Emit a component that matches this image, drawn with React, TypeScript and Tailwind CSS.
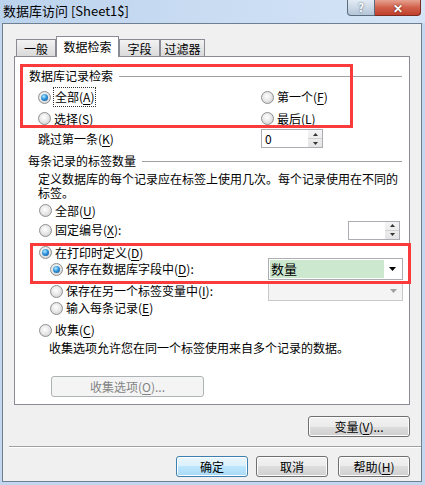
import React from "react";

function Radio({ on }: { on?: boolean }) {
  return (
    <span className="w-[13px] h-[13px] rounded-full border border-[#8e8f8f] bg-[radial-gradient(circle_at_45%_40%,#ffffff,#ececec_40%,#c8c8c8)] flex items-center justify-center shrink-0">
      {on && (
        <span className="w-[7px] h-[7px] rounded-full bg-[radial-gradient(circle_at_40%_35%,#b6ecff,#2f93dc_45%,#0b4c8c)]" />
      )}
    </span>
  );
}

function M({ t, k, after = "" }: { t: string; k: string; after?: string }) {
  return (
    <span>
      {t}(<span className="underline underline-offset-2">{k}</span>){after}
    </span>
  );
}

function Arrow({ up, color = "#333" }: { up?: boolean; color?: string }) {
  return (
    <svg width="5" height="3" viewBox="0 0 5 3">
      <path d={up ? "M2.5 0 L5 3 L0 3 Z" : "M0 0 L5 0 L2.5 3 Z"} fill={color} />
    </svg>
  );
}

function Spin({ className, value }: { className: string; value?: string }) {
  return (
    <div className={`${className} h-[19px] border border-[#abadb3] bg-white flex`}>
      <div className="flex-1 pl-[3px] leading-[17px] text-[12px]">{value}</div>
      <div className="w-[14px] flex flex-col bg-gradient-to-b from-[#f4f4f4] to-[#e4e4e4]">
        <div className="flex-1 flex items-center justify-center">
          <Arrow up />
        </div>
        <div className="h-px bg-[#d2d2d2]" />
        <div className="flex-1 flex items-center justify-center">
          <Arrow />
        </div>
      </div>
    </div>
  );
}

function Btn({
  children,
  className = "",
  primary,
  disabled,
}: {
  children: React.ReactNode;
  className?: string;
  primary?: boolean;
  disabled?: boolean;
}) {
  const skin = disabled
    ? "border-[#adb2b5] bg-[#f4f4f4] text-[#838383]"
    : primary
    ? "border-[#3c7fb1] bg-[linear-gradient(#eaf6fd_0%,#d9f0fc_50%,#bee6fd_50%,#a7d9f5_100%)] shadow-[inset_0_0_0_1px_#ffffff]"
    : "border-[#707070] bg-[linear-gradient(#f2f2f2_0%,#ebebeb_50%,#dddddd_50%,#cfcfcf_100%)] shadow-[inset_0_0_0_1px_#fcfcfc]";
  return (
    <div
      className={`${className} h-[21px] rounded-[3px] border ${skin} flex items-center justify-center text-[12px] leading-none`}
    >
      {children}
    </div>
  );
}

function Tab({ label, active, className = "" }: { label: string; active?: boolean; className?: string }) {
  return active ? (
    <div
      className={`${className} relative z-10 h-[21px] mb-[-1px] border border-b-0 border-[#898c95] bg-white flex items-center justify-center text-[12px]`}
    >
      {label}
    </div>
  ) : (
    <div
      className={`${className} h-[17px] border border-b-0 border-[#898c95] bg-gradient-to-b from-[#f3f3f3] to-[#dadada] flex items-center justify-center text-[12px] pt-[1px]`}
    >
      {label}
    </div>
  );
}

export default function App() {
  return (
    <div className="w-[425px] h-[485px] overflow-hidden bg-[#c3d8f0] font-['Noto_Sans_CJK_SC','Noto_Sans',sans-serif] text-black select-none">
      {/* Title bar */}
      <div className="h-[23px] flex justify-between bg-gradient-to-r from-[#bcd3ed] via-[#c9dcf2] to-[#d5e5f7]">
        <div className="pl-[3px] pt-[3px] text-[13px] leading-[16px]">数据库访问 [Sheet1$]</div>
        <div className="flex items-start pr-[4px]">
          <div className="w-[28px] h-[16px] rounded-bl-[4px] border border-t-0 border-[#5d6d80] bg-gradient-to-b from-[#e3ebf4] to-[#b4c5d8] flex items-center justify-center text-[11px] font-bold text-white [text-shadow:0_0_2px_#3a4a5c] leading-none">
            ?
          </div>
          <div className="w-[46px] h-[16px] rounded-br-[4px] border border-t-0 border-l-0 border-[#7a2a20] bg-gradient-to-b from-[#e6a291] via-[#d0604b] to-[#c0402c] flex items-center justify-center text-[12px] font-bold text-white [text-shadow:0_0_2px_#5a1a10] leading-none">
            ✕
          </div>
        </div>
      </div>

      {/* Client */}
      <div className="ml-[2px] w-[420px] h-[459px] border border-[#6f7f92] bg-[#f0f0f0] pt-[12px]">
        {/* Tabs */}
        <div className="ml-[13px] flex items-end h-[20px]">
          <Tab label="一般" className="w-[40px]" />
          <Tab label="数据检索" active className="w-[63px]" />
          <Tab label="字段" className="w-[41px]" />
          <Tab label="过滤器" className="w-[45px]" />
        </div>

        {/* Panel */}
        <div className="relative ml-[11px] w-[396px] h-[349px] border border-[#898c95] bg-white text-[12px]">
          <div className="pt-[12px]">
            <div className="h-[14px] flex items-center pl-[14px] pr-[7px]">
              <span className="leading-[14px]">数据库记录检索</span>
              <div className="flex-1 ml-[6px] h-px bg-[#a0a0a0]" />
            </div>

            <div className="mt-[3px] h-[22px] flex items-center pl-[23px]">
              <div className="w-[223px] flex items-center gap-[3px]">
                <Radio on />
                <span className="outline-1 outline-dotted outline-[#333] px-[1px]">
                  <M t="全部" k="A" />
                </span>
              </div>
              <div className="flex items-center gap-[3px]">
                <Radio />
                <M t="第一个" k="F" />
              </div>
            </div>
            <div className="h-[21px] flex items-center pl-[23px]">
              <div className="w-[223px] flex items-center gap-[3px]">
                <Radio />
                <M t="选择" k="S" />
              </div>
              <div className="flex items-center gap-[3px]">
                <Radio />
                <M t="最后" k="L" />
              </div>
            </div>
            <div className="h-[19px] flex items-center pl-[23px]">
              <div className="w-[223px]">
                <M t="跳过第一条" k="K" />
              </div>
              <Spin className="w-[62px]" value="0" />
            </div>

            <div className="mt-[6px] h-[14px] flex items-center pl-[13px] pr-[7px]">
              <span className="leading-[14px]">每条记录的标签数量</span>
              <div className="flex-1 ml-[6px] h-px bg-[#a0a0a0]" />
            </div>

            <div className="mt-[4px] pl-[23px] leading-[14px]">
              定义数据库的每个记录应在标签上使用几次。每个记录使用在不同的
              <br />
              标签。
            </div>

            <div className="mt-[1px] h-[19px] flex items-center pl-[24px] gap-[3px]">
              <Radio />
              <M t="全部" k="U" />
            </div>
            <div className="h-[20px] flex items-center pl-[24px]">
              <div className="w-[309px] flex items-center gap-[3px]">
                <Radio />
                <M t="固定编号" k="X" after=":" />
              </div>
              <Spin className="w-[52px]" />
            </div>

            <div className="mt-[4px] h-[17px] flex items-center pl-[24px] gap-[3px]">
              <Radio on />
              <M t="在打印时定义" k="D" />
            </div>
            <div className="mt-[-3px] h-[22px] flex items-center pl-[35px]">
              <div className="w-[218px] flex items-center gap-[3px]">
                <Radio on />
                <M t="保存在数据库字段中" k="D" after=":" />
              </div>
              <div className="w-[135px] h-[22px] border border-[#abadb3] bg-white flex p-[1px]">
                <div className="flex-1 bg-[#cce8cf] pl-[1px] leading-[18px] text-[13px]">数量</div>
                <div className="w-[17px] flex items-center justify-center">
                  <svg width="7" height="4" viewBox="0 0 7 4">
                    <path d="M0 0 L7 0 L3.5 4 Z" fill="#000" />
                  </svg>
                </div>
              </div>
            </div>
            <div className="mt-[1px] h-[20px] flex items-center pl-[35px]">
              <div className="w-[218px] flex items-center gap-[3px]">
                <Radio />
                <M t="保存在另一个标签变量中" k="I" after=":" />
              </div>
              <div className="w-[135px] h-[20px] border border-[#c9c9c9] bg-[#f4f4f4] flex justify-end">
                <div className="w-[17px] flex items-center justify-center">
                  <svg width="7" height="4" viewBox="0 0 7 4">
                    <path d="M0 0 L7 0 L3.5 4 Z" fill="#a0a0a0" />
                  </svg>
                </div>
              </div>
            </div>
            <div className="h-[14px] flex items-center pl-[35px] gap-[3px]">
              <Radio />
              <M t="输入每条记录" k="E" />
            </div>

            <div className="mt-[7px] h-[16px] flex items-center pl-[24px] gap-[3px]">
              <Radio />
              <M t="收集" k="C" />
            </div>
            <div className="mt-[3px] h-[14px] flex items-center pl-[34px]">
              收集选项允许您在同一个标签使用来自多个记录的数据。
            </div>
            <div className="mt-[21px] pl-[36px]">
              <Btn disabled className="w-[153px]">
                <M t="收集选项" k="O" after="..." />
              </Btn>
            </div>
          </div>

          {/* annotation boxes */}
          <div className="absolute left-[5px] top-[7px] w-[333px] h-[64px] border-[3px] border-[#f93b3b] pointer-events-none" />
          <div className="absolute left-[15px] top-[186px] w-[381px] h-[41px] border-[3px] border-[#f93b3b] pointer-events-none" />
        </div>

        {/* Variables button */}
        <div className="mt-[11px] flex justify-end pr-[11px]">
          <Btn className="w-[102px]">
            <M t="变量" k="V" after="..." />
          </Btn>
        </div>

        {/* Separator */}
        <div className="mt-[9px] ml-[6px] h-px bg-[#a0a0a0]" />
        <div className="ml-[6px] h-px bg-white" />

        {/* Bottom buttons */}
        <div className="mt-[8px] flex justify-end pr-[11px]">
          <Btn primary className="w-[72px]">
            确定
          </Btn>
          <Btn className="w-[72px] ml-[8px]">取消</Btn>
          <Btn className="w-[72px] ml-[10px]">
            <M t="帮助" k="H" />
          </Btn>
        </div>
      </div>
    </div>
  );
}
